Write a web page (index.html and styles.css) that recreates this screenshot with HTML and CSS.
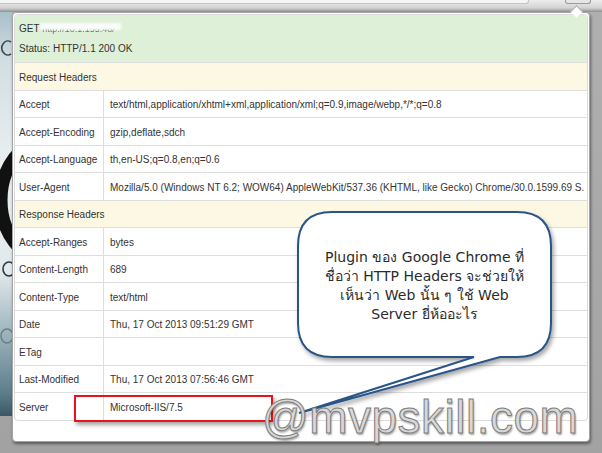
FILE: index.html
```html
<!DOCTYPE html>
<html lang="en">
<head>
    <meta charset="UTF-8">
    <title>HTTP Headers</title>
    <link rel="stylesheet" href="styles.css">
</head>
<body>

<div class="screen">
    <!--browser toolbar strip at the top-->
    <div class="toolbar">
        <div class="omnibox"></div>
        <div class="ext-button"></div>
    </div>

    <div class="main">
        <!--the web page behind the popup, only a thin strip shows-->
        <div class="backdrop">
            <svg width="12" height="404" viewBox="0 0 12 404">
                <path d="M11 30 A6 7 0 1 0 11 42" fill="none" stroke="#3d4a50" stroke-width="1.6"/>
                <ellipse cx="46" cy="188" rx="45" ry="59" fill="none" stroke="#111" stroke-width="13"/>
                <ellipse cx="9" cy="257" rx="6" ry="7" fill="none" stroke="#2d3a40" stroke-width="1.6"/>
                <ellipse cx="7" cy="324" rx="6" ry="7" fill="none" stroke="#6a8088" stroke-width="1.4"/>
            </svg>
        </div>

        <div class="popup">
            <span class="notch"></span>
            <div class="headers">
                <div class="request-line">
                    <p>GET <span class="url">http://10.1.155.48/</span></p>
                    <p>Status: HTTP/1.1 200 OK</p>
                </div>

                <div class="section">Request Headers</div>
                <div class="row"><div class="key">Accept</div><div class="value">text/html,application/xhtml+xml,application/xml;q=0.9,image/webp,*/*;q=0.8</div></div>
                <div class="row"><div class="key">Accept-Encoding</div><div class="value">gzip,deflate,sdch</div></div>
                <div class="row"><div class="key">Accept-Language</div><div class="value">th,en-US;q=0.8,en;q=0.6</div></div>
                <div class="row"><div class="key">User-Agent</div><div class="value">Mozilla/5.0 (Windows NT 6.2; WOW64) AppleWebKit/537.36 (KHTML, like Gecko) Chrome/30.0.1599.69 S.</div></div>

                <div class="section">Response Headers</div>
                <div class="row"><div class="key">Accept-Ranges</div><div class="value">bytes</div></div>
                <div class="row"><div class="key">Content-Length</div><div class="value">689</div></div>
                <div class="row"><div class="key">Content-Type</div><div class="value">text/html</div></div>
                <div class="row"><div class="key">Date</div><div class="value">Thu, 17 Oct 2013 09:51:29 GMT</div></div>
                <div class="row"><div class="key">ETag</div><div class="value"></div></div>
                <div class="row"><div class="key">Last-Modified</div><div class="value">Thu, 17 Oct 2013 07:56:46 GMT</div></div>
                <div class="row"><div class="key">Server</div><div class="value">Microsoft-IIS/7.5</div></div>
            </div>
        </div>

        <div class="gutter"></div>
    </div>

    <!--annotations drawn over the screenshot-->
    <div class="highlight"></div>

    <svg class="callout" width="602" height="453" viewBox="0 0 602 453">
        <defs>
            <filter id="shade" x="-10%" y="-10%" width="130%" height="130%">
                <feDropShadow dx="2" dy="3" stdDeviation="2" flood-color="#000" flood-opacity="0.35"/>
            </filter>
        </defs>
        <path d="M332 212 H517 Q551 212 551 246 V323 Q551 357 517 357 H500 L299 413 L474 357 H332 Q298 357 298 323 V246 Q298 212 332 212 Z"
              fill="#fff" stroke="#2a5488" stroke-width="2" filter="url(#shade)"/>
    </svg>

    <div class="callout-text">
        Plugin ของ Google Chrome ที่<br>
        ชื่อว่า HTTP Headers จะช่วยให้<br>
        เห็นว่า Web นั้น ๆ ใช้ Web<br>
        Server ยี่ห้ออะไร
    </div>

    <div class="watermark">@mvpskill.com</div>
</div>

</body>
</html>
```

FILE: styles.css
```css
/*whole picture*/
body {
    margin: 0;
    font-family: "Liberation Sans", Arial, sans-serif;
    color: #333;
}

.screen {
    position: relative;
    width: 602px;
    height: 453px;
    overflow: hidden;
    background: linear-gradient(#b0b0b0, #a2a2a2);
}

/*browser toolbar*/
.toolbar {
    display: flex;
    height: 12px;
    background: linear-gradient(#ececec 0px, #e0e0e0 4px, #d2d2d2 8px, #8e8e8e 12px);
}

.omnibox {
    width: 528px;
    height: 3px;
    background-color: #f6f6f6;
    border-bottom: 1px solid #c4c4c4;
    border-right: 1px solid #c4c4c4;
    border-bottom-right-radius: 3px;
}

.ext-button {
    width: 24px;
    height: 3px;
    margin-left: 36px;
    background-color: #e6e6e6;
    border: 1px solid #9a9a9a;
    border-top: none;
    border-radius: 0 0 3px 3px;
}

.main {
    display: flex;
    align-items: flex-start;
}

/*the page behind the popup*/
.backdrop {
    width: 12px;
    height: 404px;
    background: linear-gradient(#a9c0cb 0px, #d3dee3 50px, #e9eff1 150px, #e2e9ec 260px, #9fb5be 320px, #5d7f8c 380px, #3b5864 404px);
}

.backdrop svg {
    display: block;
}

/*the extension popup*/
.popup {
    position: relative;
    box-sizing: border-box;
    width: 578px;
    height: 430px;
    padding: 1px 1px 21px 1px;
    background-color: #fff;
    border: 1px solid #a4a4a4;
    border-radius: 4px;
    box-shadow: 1px 2px 3px rgba(0, 0, 0, 0.45);
}

.notch {
    position: absolute;
    top: -6px;
    left: 559px;
    width: 8px;
    height: 8px;
    background-color: #fff;
    border-left: 1px solid #a4a4a4;
    border-top: 1px solid #a4a4a4;
    transform: rotate(45deg);
}

.headers {
    border: 1px solid #dcdcdc;
    border-radius: 4px;
    overflow: hidden;
    font-size: 10px;
}

.request-line {
    height: 47px;
    box-sizing: border-box;
    padding: 4px 0 0 4px;
    background-color: #dff0d8;
}

.request-line p {
    margin: 0;
    line-height: 19px;
}

.url {
    position: relative;
    font-size: 9px;
    color: #666;
    filter: blur(0.4px);
}

.url::after {
    content: "";
    position: absolute;
    left: -2px;
    right: -6px;
    top: -1px;
    height: 7px;
    background-color: #fafcf9;
    filter: blur(1px);
}

.section, .row {
    display: flex;
    align-items: center;
    box-sizing: border-box;
    height: 27.5px;
    padding-top: 2px;
    border-top: 1px solid #dedede;
}

.section {
    padding-left: 4px;
    background-color: #fcf8e3;
}

.row {
    align-items: stretch;
    padding-top: 0;
}

.key {
    box-sizing: border-box;
    width: 89px;
    padding: 2px 0 0 4px;
    display: flex;
    align-items: center;
    border-right: 1px solid #dedede;
}

.value {
    flex: 1;
    display: flex;
    align-items: center;
    padding: 2px 0 0 6px;
    white-space: nowrap;
    overflow: hidden;
}

.gutter {
    flex: 1;
}

/*red box round the Server value*/
.highlight {
    position: absolute;
    left: 74px;
    top: 395px;
    width: 195px;
    height: 23px;
    border: 2px solid #e8141b;
    box-shadow: 2px 3px 4px rgba(0, 0, 0, 0.35);
}

/*speech bubble*/
.callout {
    position: absolute;
    left: 0;
    top: 0;
}

.callout-text {
    position: absolute;
    left: 298px;
    top: 248px;
    width: 253px;
    text-align: center;
    font-family: "DejaVu Sans", "Noto Sans", sans-serif;
    font-size: 14px;
    line-height: 19px;
    color: #2b2b2b;
}

.watermark {
    position: absolute;
    left: 262px;
    top: 394px;
    font-family: "Liberation Sans", Arial, sans-serif;
    font-size: 46px;
    line-height: 46px;
    letter-spacing: 0.5px;
    color: #d8d8d8;
    -webkit-text-stroke: 1px #7e7e7e;
    text-shadow: 1px 2px 2px rgba(0, 0, 0, 0.35);
}
```
